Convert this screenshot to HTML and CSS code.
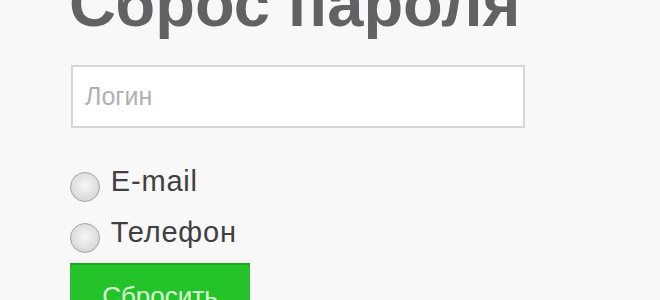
FILE: index.html
```html
<!DOCTYPE html>
<html lang="ru">
<head>
    <meta charset="UTF-8">
    <meta name="viewport" content="width=device-width, initial-scale=1.0">
    <title>Сброс пароля</title>
    <link rel="stylesheet" href="styles.css">
</head>
<body>
    <form class="reset-form">
        <h1 class="reset-title">Сброс пароля</h1>

        <input class="login-input" type="text" placeholder="Логин">

        <div class="method-list">
            <label class="method"><input type="radio" name="method" value="email"> E-mail</label>
            <label class="method"><input type="radio" name="method" value="phone"> Телефон</label>
        </div>

        <button class="reset-btn" type="submit">Сбросить</button>
    </form>
</body>
</html>
```

FILE: styles.css
```css
* {
    margin: 0;
    padding: 0;
    box-sizing: border-box;
}

body {
    font-family: "Liberation Sans", Arial, sans-serif;
    background-color: #f8f8f8;
    overflow: hidden;
}

.reset-form {
    display: flex;
    flex-direction: column;
    align-items: flex-start;
    padding-left: 70px;
}

.reset-title {
    margin-top: -28px;
    margin-left: -1px;
    font-size: 65px;
    line-height: 64px;
    font-weight: bold;
    color: #626264;
}

.login-input {
    margin-top: 29px;
    margin-left: 1px;
    width: 454px;
    height: 63px;
    padding: 0 12px;
    border: 2px solid #d6d6d6;
    background-color: #fff;
    font-family: inherit;
    font-size: 25px;
    color: #333;
    outline: none;
}

.login-input::placeholder {
    color: #b0b0b0;
}

.method-list {
    margin-top: 28px;
    display: flex;
    flex-direction: column;
}

.method {
    font-size: 29px;
    line-height: 51px;
    letter-spacing: 0.8px;
    color: #404040;
}

.method input {
    appearance: none;
    width: 30px;
    height: 30px;
    margin-right: 2px;
    vertical-align: -11px;
    border: 1px solid #a4a4a4;
    border-radius: 50%;
    background: radial-gradient(circle at 50% 45%, #f6f6f6 0%, #dedede 60%, #c4c4c4 100%);
}

.reset-btn {
    margin-top: 5px;
    width: 180px;
    height: 60px;
    padding-top: 16px;
    align-self: flex-start;
    display: flex;
    justify-content: center;
    align-items: flex-start;
    border: none;
    border-top: 2px solid #1aa81e;
    background-color: #25c32a;
    font-family: inherit;
    font-size: 26px;
    line-height: 30px;
    color: #dcffd6;
}
```
